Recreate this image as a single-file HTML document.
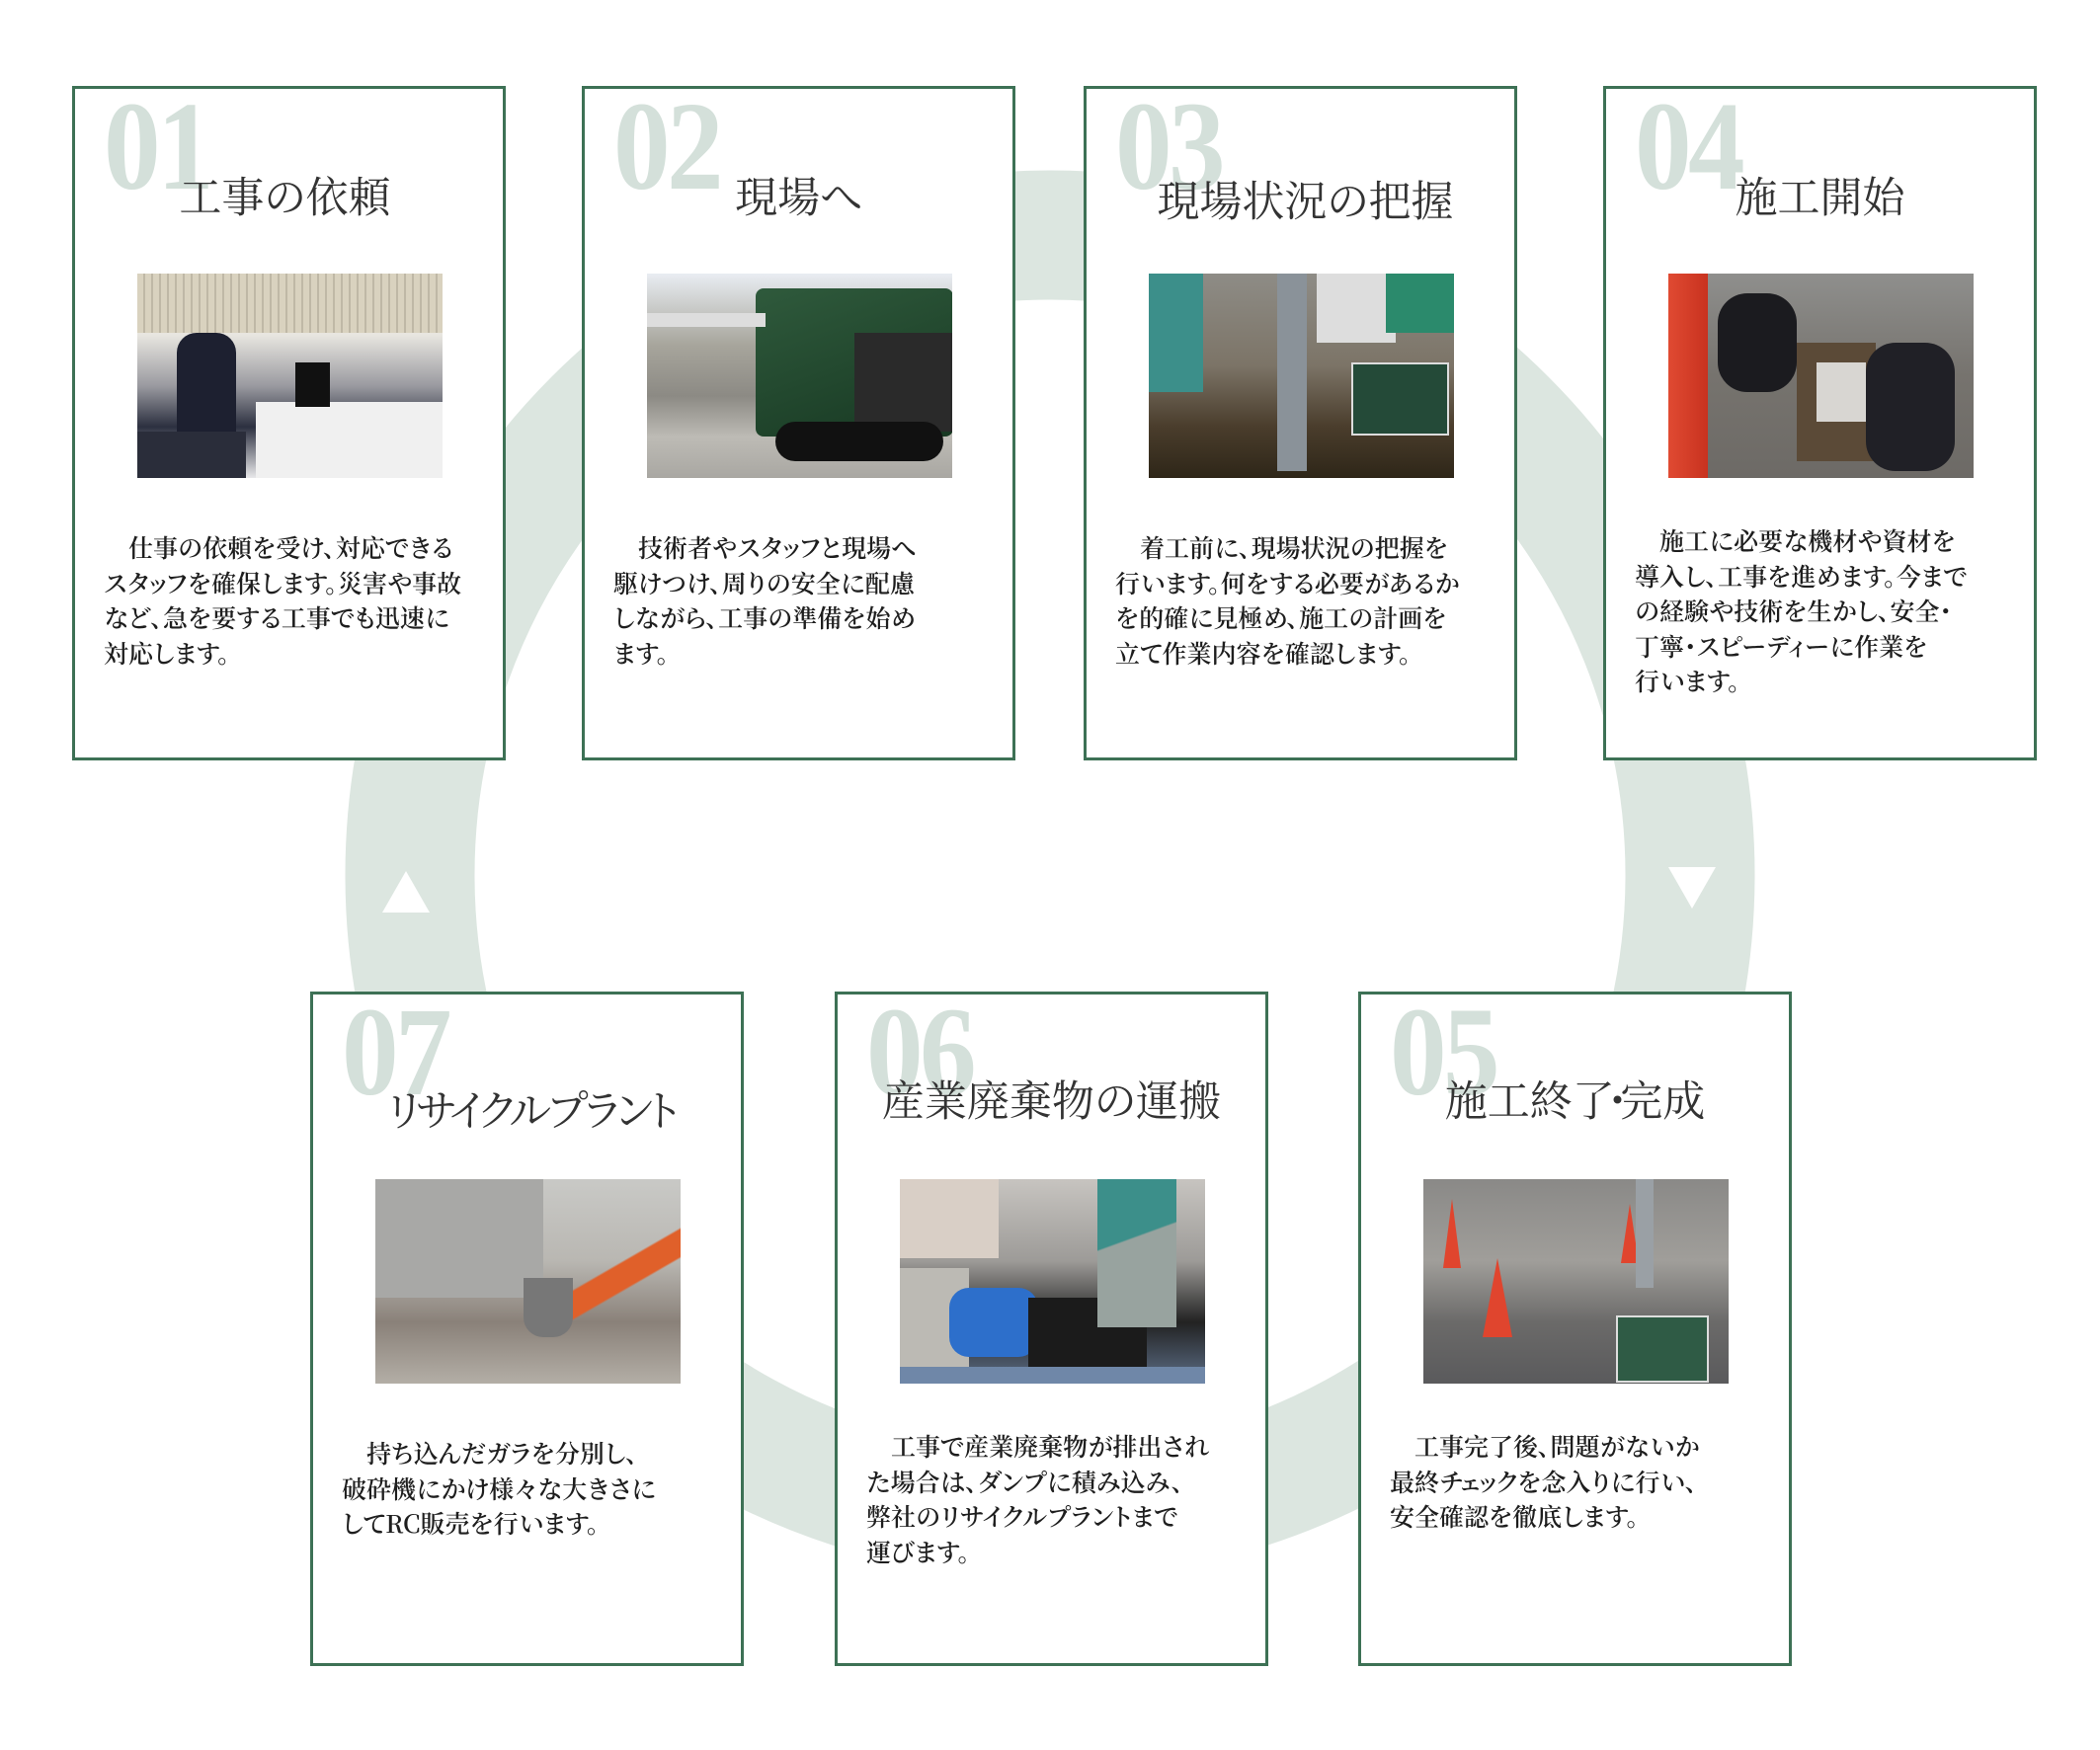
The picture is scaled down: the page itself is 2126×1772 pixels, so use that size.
<!DOCTYPE html>
<html><head><meta charset="utf-8"><style>
body{margin:0;width:2126px;height:1772px;background:#fff;position:relative;overflow:hidden;font-family:"Liberation Serif","Noto Serif CJK SC",serif;}
.card{position:absolute;width:433px;height:677px;border:3px solid #3d7155;background:#fff;box-sizing:content-box;}
.num{position:absolute;left:29px;top:-8px;font-family:"Liberation Serif",serif;font-weight:bold;font-size:128px;line-height:132px;color:#d4e0da;transform:scaleX(0.9);transform-origin:0 0;letter-spacing:-4px;}
.ttl{position:absolute;left:0;right:0;top:80px;text-align:center;font-size:43px;line-height:56px;color:#333;font-family:"Noto Serif CJK SC","Noto Sans CJK SC",serif;font-feature-settings:"palt";}
.img{position:absolute;left:63px;top:187px;width:309px;height:207px;overflow:hidden;}
.txt{position:absolute;left:29px;top:447px;font-size:25px;line-height:35.5px;color:#1e1e1e;white-space:nowrap;font-weight:600;font-family:"Noto Serif CJK SC","Noto Sans CJK SC",serif;font-feature-settings:"palt";}
.img div{position:absolute;}
</style></head><body>
<svg width="2126" height="1772" style="position:absolute;left:0;top:0">
<circle cx="1063" cy="886" r="648" fill="none" stroke="#dce6e0" stroke-width="131"/>
<polygon points="411,882 387,924 435,924" fill="#fff"/>
<polygon points="1689,878 1737,878 1713,920" fill="#fff"/>
</svg>

<div class="card" style="left:73px;top:87px">
<div class="num">01</div><div class="ttl" style="left:-8px">工事の依頼</div>
<div class="img" style="background:linear-gradient(180deg,#cfc9bd 0%,#e8e6e0 30%,#9a9aa0 55%,#2c3040 75%,#e8e8ea 100%)">
<div style="left:0;top:0;width:310px;height:60px;background:repeating-linear-gradient(90deg,#d9d2bf 0 6px,#bfb8a6 6px 8px)"></div>
<div style="left:120px;top:130px;width:190px;height:80px;background:#f0f0f0"></div>
<div style="left:40px;top:60px;width:60px;height:110px;background:#1d2030;border-radius:20px 20px 0 0"></div>
<div style="left:160px;top:90px;width:35px;height:45px;background:#111"></div>
<div style="left:0;top:160px;width:110px;height:50px;background:#2a2d3a"></div>
</div>
<div class="txt">　仕事の依頼を受け、対応できる<br>スタッフを確保します。災害や事故<br>など、急を要する工事でも迅速に<br>対応します。</div>
</div>

<div class="card" style="left:589px;top:87px">
<div class="num">02</div><div class="ttl">現場へ</div>
<div class="img" style="background:linear-gradient(180deg,#e9edf2 0%,#a7a59c 35%,#8c8a84 60%,#bdbbb5 80%,#a9a7a2 100%)">
<div style="left:110px;top:15px;width:200px;height:150px;background:linear-gradient(160deg,#2f5a3c,#173822);border-radius:8px"></div>
<div style="left:210px;top:60px;width:100px;height:100px;background:#2a2a2a"></div>
<div style="left:0;top:40px;width:120px;height:14px;background:#ddd"></div>
<div style="left:130px;top:150px;width:170px;height:40px;background:#111;border-radius:20px"></div>
</div>
<div class="txt">　技術者やスタッフと現場へ<br>駆けつけ、周りの安全に配慮<br>しながら、工事の準備を始め<br>ます。</div>
</div>

<div class="card" style="left:1097px;top:87px">
<div class="num">03</div><div class="ttl" style="left:10px;top:84px">現場状況の把握</div>
<div class="img" style="background:linear-gradient(180deg,#8e8c86 0%,#7c7467 45%,#4a3d2c 75%,#2e2618 100%)">
<div style="left:0;top:0;width:55px;height:120px;background:#3c8f8a"></div>
<div style="left:130px;top:0;width:30px;height:200px;background:#8a9299"></div>
<div style="left:170px;top:0;width:80px;height:70px;background:#ddd"></div>
<div style="left:240px;top:0;width:70px;height:60px;background:#2b8a6c"></div>
<div style="left:205px;top:90px;width:95px;height:70px;background:#244a38;border:2px solid #ddd"></div>
</div>
<div class="txt">　着工前に、現場状況の把握を<br>行います。何をする必要があるか<br>を的確に見極め、施工の計画を<br>立て作業内容を確認します。</div>
</div>

<div class="card" style="left:1623px;top:87px">
<div class="num">04</div><div class="ttl" style="left:0">施工開始</div>
<div class="img" style="background:linear-gradient(180deg,#8f8f8d 0%,#76736e 50%,#6d6a66 100%)">
<div style="left:0;top:0;width:40px;height:207px;background:linear-gradient(90deg,#e04a32,#c8321f)"></div>
<div style="left:50px;top:20px;width:80px;height:100px;background:#1b1b1f;border-radius:30px"></div>
<div style="left:130px;top:70px;width:80px;height:120px;background:#5b4a37"></div>
<div style="left:200px;top:70px;width:90px;height:130px;background:#202026;border-radius:30px"></div>
<div style="left:150px;top:90px;width:50px;height:60px;background:#d8d6d2"></div>
</div>
<div class="txt" style="top:440px">　施工に必要な機材や資材を<br>導入し、工事を進めます。今まで<br>の経験や技術を生かし、安全・<br>丁寧・スピーディーに作業を<br>行います。</div>
</div>

<div class="card" style="left:314px;top:1004px">
<div class="num">07</div><div class="ttl" style="left:10px;top:88px;letter-spacing:-3px">リサイクルプラント</div>
<div class="img" style="background:linear-gradient(180deg,#c9c9c6 0%,#b9b7b2 40%,#8a8179 70%,#b3aea6 100%)">
<div style="left:0;top:0;width:170px;height:120px;background:#a8a8a6"></div>
<div style="left:160px;top:10px;width:150px;height:140px;background:linear-gradient(150deg,transparent 55%,#e0602a 56%,#e0602a 68%,transparent 69%)"></div>
<div style="left:150px;top:100px;width:50px;height:60px;background:#777;border-radius:0 0 20px 20px"></div>
</div>
<div class="txt">　持ち込んだガラを分別し、<br>破砕機にかけ様々な大きさに<br>してRC販売を行います。</div>
</div>

<div class="card" style="left:845px;top:1004px">
<div class="num">06</div><div class="ttl" style="left:0;top:78px">産業廃棄物の運搬</div>
<div class="img" style="background:linear-gradient(180deg,#c7c4c0 0%,#9d9b98 40%,#222 70%,#5d6f88 100%)">
<div style="left:0;top:0;width:100px;height:80px;background:#d9cfc6"></div>
<div style="left:0;top:90px;width:70px;height:100px;background:#bcbab4"></div>
<div style="left:50px;top:110px;width:90px;height:70px;background:#2d6fcb;border-radius:20px"></div>
<div style="left:130px;top:120px;width:120px;height:80px;background:#1b1b1b"></div>
<div style="left:200px;top:0;width:80px;height:150px;background:linear-gradient(160deg,#3c8f8a 0 40%,#98a39f 41%)"></div>
<div style="left:0;top:190px;width:310px;height:17px;background:#6f87a8"></div>
</div>
<div class="txt" style="top:440px">　工事で産業廃棄物が排出され<br>た場合は、ダンプに積み込み、<br>弊社のリサイクルプラントまで<br>運びます。</div>
</div>

<div class="card" style="left:1375px;top:1004px">
<div class="num">05</div><div class="ttl" style="left:0;top:78px">施工終了<span style="margin:0 -8px">・</span>完成</div>
<div class="img" style="background:linear-gradient(180deg,#8a8987 0%,#a09e9a 40%,#6b6a69 70%,#5a5a5c 100%)">
<div style="left:20px;top:20px;width:18px;height:70px;background:#e0452e;clip-path:polygon(50% 0,100% 100%,0 100%)"></div>
<div style="left:60px;top:80px;width:30px;height:80px;background:#e0452e;clip-path:polygon(50% 0,100% 100%,0 100%)"></div>
<div style="left:200px;top:25px;width:18px;height:60px;background:#e0452e;clip-path:polygon(50% 0,100% 100%,0 100%)"></div>
<div style="left:215px;top:0;width:18px;height:110px;background:#9aa0a5"></div>
<div style="left:195px;top:138px;width:90px;height:64px;background:#2f5b45;border:2px solid #ddd"></div>
</div>
<div class="txt" style="top:440px">　工事完了後、問題がないか<br>最終チェックを念入りに行い、<br>安全確認を徹底します。</div>
</div>
</body></html>
